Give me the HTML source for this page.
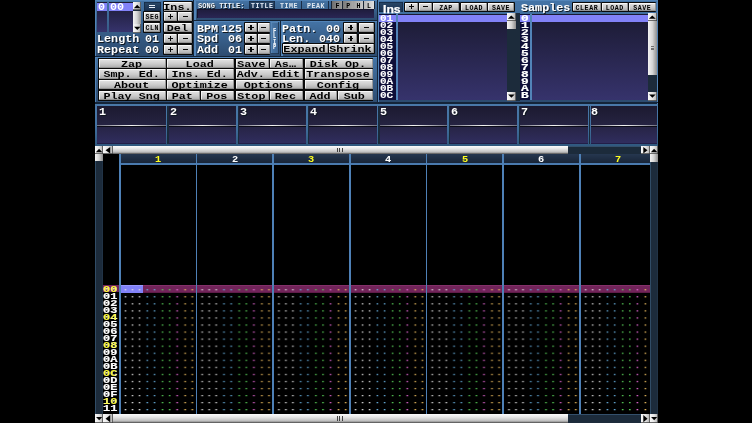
<!DOCTYPE html><html><head><meta charset="utf-8"><style>
html,body{margin:0;padding:0;background:#000;width:752px;height:423px;overflow:hidden}
#app{position:absolute;left:0;top:0;width:752px;height:423px;overflow:hidden;filter:blur(0.3px)}
#app div{position:absolute;box-sizing:border-box}
</style></head><body><div id="app">
<div style="left:94.60px;top:0.00px;width:563.40px;height:104.00px;background:#3b6290"></div>
<div style="left:95.00px;top:0.00px;width:99.40px;height:56.90px;background:linear-gradient(#4474a6,#2c4a6e)"></div>
<div style="left:95.00px;top:0.00px;width:99.40px;height:1.20px;background:#5284b8"></div>
<div style="left:95.00px;top:0.00px;width:1.20px;height:56.90px;background:#5284b8"></div>
<div style="left:95.00px;top:55.70px;width:99.40px;height:1.20px;background:#142438"></div>
<div style="left:193.20px;top:0.00px;width:1.20px;height:56.90px;background:#142438"></div>
<div style="left:194.40px;top:0.00px;width:183.40px;height:20.90px;background:linear-gradient(#4474a6,#2c4a6e)"></div>
<div style="left:194.40px;top:0.00px;width:183.40px;height:1.20px;background:#5284b8"></div>
<div style="left:194.40px;top:0.00px;width:1.20px;height:20.90px;background:#5284b8"></div>
<div style="left:194.40px;top:19.70px;width:183.40px;height:1.20px;background:#142438"></div>
<div style="left:376.60px;top:0.00px;width:1.20px;height:20.90px;background:#142438"></div>
<div style="left:194.40px;top:20.90px;width:87.00px;height:36.00px;background:linear-gradient(#4474a6,#2c4a6e)"></div>
<div style="left:194.40px;top:20.90px;width:87.00px;height:1.20px;background:#5284b8"></div>
<div style="left:194.40px;top:20.90px;width:1.20px;height:36.00px;background:#5284b8"></div>
<div style="left:194.40px;top:55.70px;width:87.00px;height:1.20px;background:#142438"></div>
<div style="left:280.20px;top:20.90px;width:1.20px;height:36.00px;background:#142438"></div>
<div style="left:281.40px;top:20.90px;width:96.40px;height:36.00px;background:linear-gradient(#4474a6,#2c4a6e)"></div>
<div style="left:281.40px;top:20.90px;width:96.40px;height:1.20px;background:#5284b8"></div>
<div style="left:281.40px;top:20.90px;width:1.20px;height:36.00px;background:#5284b8"></div>
<div style="left:281.40px;top:55.70px;width:96.40px;height:1.20px;background:#142438"></div>
<div style="left:376.60px;top:20.90px;width:1.20px;height:36.00px;background:#142438"></div>
<div style="left:95.00px;top:56.90px;width:282.80px;height:46.70px;background:linear-gradient(#4474a6,#2c4a6e)"></div>
<div style="left:95.00px;top:56.90px;width:282.80px;height:1.20px;background:#5284b8"></div>
<div style="left:95.00px;top:56.90px;width:1.20px;height:46.70px;background:#5284b8"></div>
<div style="left:95.00px;top:102.40px;width:282.80px;height:1.20px;background:#142438"></div>
<div style="left:376.60px;top:56.90px;width:1.20px;height:46.70px;background:#142438"></div>
<div style="left:377.80px;top:0.00px;width:280.20px;height:103.60px;background:linear-gradient(#4474a6,#2c4a6e)"></div>
<div style="left:377.80px;top:0.00px;width:280.20px;height:1.20px;background:#5284b8"></div>
<div style="left:377.80px;top:0.00px;width:1.20px;height:103.60px;background:#5284b8"></div>
<div style="left:377.80px;top:102.40px;width:280.20px;height:1.20px;background:#142438"></div>
<div style="left:656.80px;top:0.00px;width:1.20px;height:103.60px;background:#142438"></div>
<div style="left:656.90px;top:0.00px;width:1.10px;height:103.60px;background:#5284b8"></div>
<div style="left:97.30px;top:2.40px;width:10.00px;height:30.00px;background:linear-gradient(#1b1a32,#36336c)"></div>
<div style="left:109.20px;top:2.40px;width:23.80px;height:30.00px;background:linear-gradient(#1b1a32,#36336c)"></div>
<div style="left:97.30px;top:3.30px;width:10.00px;height:7.40px;background:#8282f8"></div>
<div style="left:109.20px;top:3.30px;width:23.80px;height:7.40px;background:#8282f8"></div>
<div style="left:98.20px;top:2.00px;font-family:'Liberation Mono',monospace;font-weight:bold;font-size:10.0px;line-height:11.328px;color:#fff;white-space:pre;letter-spacing:0px;transform:scaleX(1.175);transform-origin:0 0;">0</div>
<div style="left:109.80px;top:2.00px;font-family:'Liberation Mono',monospace;font-weight:bold;font-size:10.0px;line-height:11.328px;color:#fff;white-space:pre;letter-spacing:0px;transform:scaleX(1.175);transform-origin:0 0;">00</div>
<div style="left:132.90px;top:1.80px;width:8.40px;height:31.20px;background:#1c2b3b"></div>
<div style="left:132.90px;top:1.80px;width:8.40px;height:8.60px;background:linear-gradient(90deg,#fafafa,#e4e4e4 50%,#b0b0b0);box-shadow:inset -0.7px -0.7px 0 #404040"><svg viewBox="0 0 10 10" preserveAspectRatio="none" width="100%" height="100%" style="position:absolute;left:0;top:0"><path d="M1.0 7.4 L5.0 3.3 L9.0 7.4Z" fill="#000"/></svg></div>
<div style="left:132.90px;top:10.60px;width:8.40px;height:13.60px;background:linear-gradient(90deg,#f4f4f4,#d4d4d4 50%,#8e8e8e)"></div>
<div style="left:132.90px;top:24.40px;width:8.40px;height:8.60px;background:linear-gradient(90deg,#fafafa,#e4e4e4 50%,#b0b0b0);box-shadow:inset -0.7px -0.7px 0 #404040"><svg viewBox="0 0 10 10" preserveAspectRatio="none" width="100%" height="100%" style="position:absolute;left:0;top:0"><path d="M1.3 3.2 L5.1 7.0 L8.9 3.2Z" fill="#000"/></svg></div>
<div style="left:143.80px;top:1.70px;width:17.00px;height:9.20px;background:linear-gradient(#2a4868,#1a3050);box-shadow:inset 0 0 0 0.8px #142a44"></div>
<div style="left:148.90px;top:4.50px;width:6.60px;height:1.20px;background:#e8eef8"></div>
<div style="left:148.90px;top:7.00px;width:6.60px;height:1.20px;background:#e8eef8"></div>
<div style="left:143.40px;top:11.30px;width:17.80px;height:10.80px;background:#0a0a0a;border-radius:1px"></div>
<div style="left:144.30px;top:12.20px;width:16.00px;height:9.00px;background:linear-gradient(#f6f6f6 0%,#dedede 14%,#cacaca 55%,#a8a8a8 100%);box-shadow:inset -0.8px -0.8px 0 #8a8a8a,inset 0.8px 0.8px 0 #fbfbfb"></div>
<div style="left:144.30px;top:14.00px;width:16.00px;text-align:center;font-family:'Liberation Mono',monospace;font-weight:bold;font-size:6.6px;line-height:7.47648px;color:#000;white-space:pre;letter-spacing:0.55px;transform:scaleX(1.0);transform-origin:0 0;">SEG</div>
<div style="left:143.40px;top:22.00px;width:17.80px;height:11.40px;background:#0a0a0a;border-radius:1px"></div>
<div style="left:144.30px;top:22.90px;width:16.00px;height:9.60px;background:linear-gradient(#f6f6f6 0%,#dedede 14%,#cacaca 55%,#a8a8a8 100%);box-shadow:inset -0.8px -0.8px 0 #8a8a8a,inset 0.8px 0.8px 0 #fbfbfb"></div>
<div style="left:144.30px;top:25.00px;width:16.00px;text-align:center;font-family:'Liberation Mono',monospace;font-weight:bold;font-size:6.6px;line-height:7.47648px;color:#000;white-space:pre;letter-spacing:0.55px;transform:scaleX(1.0);transform-origin:0 0;">CLN</div>
<div style="left:162.60px;top:1.00px;width:30.60px;height:10.50px;background:#0a0a0a;border-radius:1px"></div>
<div style="left:163.50px;top:1.90px;width:28.80px;height:8.70px;background:linear-gradient(#f6f6f6 0%,#dedede 14%,#cacaca 55%,#a8a8a8 100%);box-shadow:inset -0.8px -0.8px 0 #8a8a8a,inset 0.8px 0.8px 0 #fbfbfb"></div>
<div style="left:162.60px;top:3.00px;width:23.53px;text-align:center;font-family:'Liberation Mono',monospace;font-weight:bold;font-size:9.6px;line-height:10.87488px;color:#000;white-space:pre;letter-spacing:0px;transform:scaleX(1.224);transform-origin:0 0;">Ins.</div>
<div style="left:162.60px;top:11.50px;width:15.50px;height:10.60px;background:#0a0a0a;border-radius:1px"></div>
<div style="left:163.50px;top:12.40px;width:13.70px;height:8.80px;background:linear-gradient(#f6f6f6 0%,#dedede 14%,#cacaca 55%,#a8a8a8 100%);box-shadow:inset -0.8px -0.8px 0 #8a8a8a,inset 0.8px 0.8px 0 #fbfbfb"></div>
<div style="left:167.55px;top:16.15px;width:5.60px;height:1.30px;background:#080808"></div>
<div style="left:169.50px;top:14.10px;width:1.70px;height:5.40px;background:#080808"></div>
<div style="left:177.30px;top:11.50px;width:15.90px;height:10.60px;background:#0a0a0a;border-radius:1px"></div>
<div style="left:178.20px;top:12.40px;width:14.10px;height:8.80px;background:linear-gradient(#f6f6f6 0%,#dedede 14%,#cacaca 55%,#a8a8a8 100%);box-shadow:inset -0.8px -0.8px 0 #8a8a8a,inset 0.8px 0.8px 0 #fbfbfb"></div>
<div style="left:182.65px;top:16.10px;width:5.20px;height:1.40px;background:#080808"></div>
<div style="left:162.60px;top:22.00px;width:30.60px;height:11.10px;background:#0a0a0a;border-radius:1px"></div>
<div style="left:163.50px;top:22.90px;width:28.80px;height:9.30px;background:linear-gradient(#f6f6f6 0%,#dedede 14%,#cacaca 55%,#a8a8a8 100%);box-shadow:inset -0.8px -0.8px 0 #8a8a8a,inset 0.8px 0.8px 0 #fbfbfb"></div>
<div style="left:162.60px;top:24.00px;width:23.53px;text-align:center;font-family:'Liberation Mono',monospace;font-weight:bold;font-size:9.6px;line-height:10.87488px;color:#000;white-space:pre;letter-spacing:0px;transform:scaleX(1.224);transform-origin:0 0;">Del</div>
<div style="left:162.60px;top:32.70px;width:15.50px;height:11.10px;background:#0a0a0a;border-radius:1px"></div>
<div style="left:163.50px;top:33.60px;width:13.70px;height:9.30px;background:linear-gradient(#f6f6f6 0%,#dedede 14%,#cacaca 55%,#a8a8a8 100%);box-shadow:inset -0.8px -0.8px 0 #8a8a8a,inset 0.8px 0.8px 0 #fbfbfb"></div>
<div style="left:167.55px;top:37.60px;width:5.60px;height:1.30px;background:#080808"></div>
<div style="left:169.50px;top:35.55px;width:1.70px;height:5.40px;background:#080808"></div>
<div style="left:177.30px;top:32.70px;width:15.90px;height:11.10px;background:#0a0a0a;border-radius:1px"></div>
<div style="left:178.20px;top:33.60px;width:14.10px;height:9.30px;background:linear-gradient(#f6f6f6 0%,#dedede 14%,#cacaca 55%,#a8a8a8 100%);box-shadow:inset -0.8px -0.8px 0 #8a8a8a,inset 0.8px 0.8px 0 #fbfbfb"></div>
<div style="left:182.65px;top:37.55px;width:5.20px;height:1.40px;background:#080808"></div>
<div style="left:162.60px;top:43.70px;width:15.50px;height:11.10px;background:#0a0a0a;border-radius:1px"></div>
<div style="left:163.50px;top:44.60px;width:13.70px;height:9.30px;background:linear-gradient(#f6f6f6 0%,#dedede 14%,#cacaca 55%,#a8a8a8 100%);box-shadow:inset -0.8px -0.8px 0 #8a8a8a,inset 0.8px 0.8px 0 #fbfbfb"></div>
<div style="left:167.55px;top:48.60px;width:5.60px;height:1.30px;background:#080808"></div>
<div style="left:169.50px;top:46.55px;width:1.70px;height:5.40px;background:#080808"></div>
<div style="left:177.30px;top:43.70px;width:15.90px;height:11.10px;background:#0a0a0a;border-radius:1px"></div>
<div style="left:178.20px;top:44.60px;width:14.10px;height:9.30px;background:linear-gradient(#f6f6f6 0%,#dedede 14%,#cacaca 55%,#a8a8a8 100%);box-shadow:inset -0.8px -0.8px 0 #8a8a8a,inset 0.8px 0.8px 0 #fbfbfb"></div>
<div style="left:182.65px;top:48.55px;width:5.20px;height:1.40px;background:#080808"></div>
<div style="left:96.60px;top:34.00px;font-family:'Liberation Mono',monospace;font-weight:bold;font-size:10.0px;line-height:11.328px;color:#fff;white-space:pre;letter-spacing:0px;transform:scaleX(1.175);transform-origin:0 0;text-shadow:0.9px 0.9px 0 #101820;">Length</div>
<div style="left:145.40px;top:34.00px;font-family:'Liberation Mono',monospace;font-weight:bold;font-size:10.0px;line-height:11.328px;color:#fff;white-space:pre;letter-spacing:0px;transform:scaleX(1.175);transform-origin:0 0;text-shadow:0.9px 0.9px 0 #101820;">01</div>
<div style="left:96.60px;top:45.00px;font-family:'Liberation Mono',monospace;font-weight:bold;font-size:10.0px;line-height:11.328px;color:#fff;white-space:pre;letter-spacing:0px;transform:scaleX(1.175);transform-origin:0 0;text-shadow:0.9px 0.9px 0 #101820;">Repeat</div>
<div style="left:145.40px;top:45.00px;font-family:'Liberation Mono',monospace;font-weight:bold;font-size:10.0px;line-height:11.328px;color:#fff;white-space:pre;letter-spacing:0px;transform:scaleX(1.175);transform-origin:0 0;text-shadow:0.9px 0.9px 0 #101820;">00</div>
<div style="left:197.60px;top:2.00px;font-family:'Liberation Mono',monospace;font-weight:bold;font-size:7.2px;line-height:8.15616px;color:#f0f4f8;white-space:pre;letter-spacing:0px;transform:scaleX(0.98);transform-origin:0 0;text-shadow:0.9px 0.9px 0 #101820;">SONG TITLE:</div>
<div style="left:249.20px;top:1.20px;width:26.20px;height:7.40px;background:linear-gradient(#2a4868,#1a3050);box-shadow:inset 0 0 0 0.8px #142a44"></div>
<div style="left:249.20px;top:3.00px;width:26.20px;text-align:center;font-family:'Liberation Mono',monospace;font-weight:bold;font-size:6.6px;line-height:7.47648px;color:#e4ecf8;white-space:pre;letter-spacing:0.55px;transform:scaleX(1.0);transform-origin:0 0;">TITLE</div>
<div style="left:275.60px;top:1.20px;width:26.00px;height:7.40px;background:linear-gradient(#4270a0,#3a6490)"></div>
<div style="left:300.90px;top:1.20px;width:1.00px;height:7.40px;background:#1a2c44"></div>
<div style="left:302.20px;top:1.20px;width:26.00px;height:7.40px;background:linear-gradient(#4270a0,#3a6490)"></div>
<div style="left:327.90px;top:1.20px;width:1.00px;height:7.40px;background:#1a2c44"></div>
<div style="left:276.40px;top:3.00px;width:25.20px;text-align:center;font-family:'Liberation Mono',monospace;font-weight:bold;font-size:6.6px;line-height:7.47648px;color:#e0e8f0;white-space:pre;letter-spacing:0.55px;transform:scaleX(1.0);transform-origin:0 0;">TIME</div>
<div style="left:304.30px;top:3.00px;width:23.40px;text-align:center;font-family:'Liberation Mono',monospace;font-weight:bold;font-size:6.6px;line-height:7.47648px;color:#e0e8f0;white-space:pre;letter-spacing:0.55px;transform:scaleX(1.0);transform-origin:0 0;">PEAK</div>
<div style="left:331.40px;top:0.60px;width:43.20px;height:8.80px;background:#182434"></div>
<div style="left:332.30px;top:1.40px;width:10.10px;height:7.20px;background:linear-gradient(90deg,#6e6e6e,#9a9a9a)"></div>
<div style="left:335.50px;top:3.00px;font-family:'Liberation Mono',monospace;font-weight:bold;font-size:6.6px;line-height:7.47648px;color:#000;white-space:pre;letter-spacing:0px;transform:scaleX(1.0);transform-origin:0 0;">F</div>
<div style="left:343.10px;top:1.40px;width:9.50px;height:7.20px;background:linear-gradient(90deg,#7a7a7a,#a8a8a8)"></div>
<div style="left:346.30px;top:3.00px;font-family:'Liberation Mono',monospace;font-weight:bold;font-size:6.6px;line-height:7.47648px;color:#000;white-space:pre;letter-spacing:0px;transform:scaleX(1.0);transform-origin:0 0;">P</div>
<div style="left:353.30px;top:1.40px;width:9.70px;height:7.20px;background:linear-gradient(90deg,#a0a0a0,#c8c8c8)"></div>
<div style="left:356.50px;top:3.00px;font-family:'Liberation Mono',monospace;font-weight:bold;font-size:6.6px;line-height:7.47648px;color:#000;white-space:pre;letter-spacing:0px;transform:scaleX(1.0);transform-origin:0 0;">H</div>
<div style="left:363.70px;top:1.40px;width:10.10px;height:7.20px;background:linear-gradient(90deg,#b8b8b8,#e0e0e0)"></div>
<div style="left:366.90px;top:3.00px;font-family:'Liberation Mono',monospace;font-weight:bold;font-size:6.6px;line-height:7.47648px;color:#000;white-space:pre;letter-spacing:0px;transform:scaleX(1.0);transform-origin:0 0;">L</div>
<div style="left:197.30px;top:9.40px;width:176.50px;height:8.60px;background:linear-gradient(#1e1c3c,#2a2654);box-shadow:inset 0.8px 0.8px 0 #141228"></div>
<div style="left:196.60px;top:24.00px;font-family:'Liberation Mono',monospace;font-weight:bold;font-size:10.0px;line-height:11.328px;color:#fff;white-space:pre;letter-spacing:0px;transform:scaleX(1.175);transform-origin:0 0;text-shadow:0.9px 0.9px 0 #101820;">BPM</div>
<div style="left:220.60px;top:24.00px;font-family:'Liberation Mono',monospace;font-weight:bold;font-size:10.0px;line-height:11.328px;color:#fff;white-space:pre;letter-spacing:0px;transform:scaleX(1.175);transform-origin:0 0;text-shadow:0.9px 0.9px 0 #101820;">125</div>
<div style="left:196.60px;top:34.00px;font-family:'Liberation Mono',monospace;font-weight:bold;font-size:10.0px;line-height:11.328px;color:#fff;white-space:pre;letter-spacing:0px;transform:scaleX(1.175);transform-origin:0 0;text-shadow:0.9px 0.9px 0 #101820;">Spd</div>
<div style="left:227.60px;top:34.00px;font-family:'Liberation Mono',monospace;font-weight:bold;font-size:10.0px;line-height:11.328px;color:#fff;white-space:pre;letter-spacing:0px;transform:scaleX(1.175);transform-origin:0 0;text-shadow:0.9px 0.9px 0 #101820;">06</div>
<div style="left:196.60px;top:45.00px;font-family:'Liberation Mono',monospace;font-weight:bold;font-size:10.0px;line-height:11.328px;color:#fff;white-space:pre;letter-spacing:0px;transform:scaleX(1.175);transform-origin:0 0;text-shadow:0.9px 0.9px 0 #101820;">Add</div>
<div style="left:227.60px;top:45.00px;font-family:'Liberation Mono',monospace;font-weight:bold;font-size:10.0px;line-height:11.328px;color:#fff;white-space:pre;letter-spacing:0px;transform:scaleX(1.175);transform-origin:0 0;text-shadow:0.9px 0.9px 0 #101820;">01</div>
<div style="left:244.10px;top:21.70px;width:13.50px;height:11.20px;background:#0a0a0a;border-radius:1px"></div>
<div style="left:245.00px;top:22.60px;width:11.70px;height:9.40px;background:linear-gradient(#f6f6f6 0%,#dedede 14%,#cacaca 55%,#a8a8a8 100%);box-shadow:inset -0.8px -0.8px 0 #8a8a8a,inset 0.8px 0.8px 0 #fbfbfb"></div>
<div style="left:248.05px;top:26.65px;width:5.60px;height:1.30px;background:#080808"></div>
<div style="left:250.00px;top:24.60px;width:1.70px;height:5.40px;background:#080808"></div>
<div style="left:256.70px;top:21.70px;width:13.80px;height:11.20px;background:#0a0a0a;border-radius:1px"></div>
<div style="left:257.60px;top:22.60px;width:12.00px;height:9.40px;background:linear-gradient(#f6f6f6 0%,#dedede 14%,#cacaca 55%,#a8a8a8 100%);box-shadow:inset -0.8px -0.8px 0 #8a8a8a,inset 0.8px 0.8px 0 #fbfbfb"></div>
<div style="left:261.00px;top:26.60px;width:5.20px;height:1.40px;background:#080808"></div>
<div style="left:244.10px;top:32.60px;width:13.50px;height:11.20px;background:#0a0a0a;border-radius:1px"></div>
<div style="left:245.00px;top:33.50px;width:11.70px;height:9.40px;background:linear-gradient(#f6f6f6 0%,#dedede 14%,#cacaca 55%,#a8a8a8 100%);box-shadow:inset -0.8px -0.8px 0 #8a8a8a,inset 0.8px 0.8px 0 #fbfbfb"></div>
<div style="left:248.05px;top:37.55px;width:5.60px;height:1.30px;background:#080808"></div>
<div style="left:250.00px;top:35.50px;width:1.70px;height:5.40px;background:#080808"></div>
<div style="left:256.70px;top:32.60px;width:13.80px;height:11.20px;background:#0a0a0a;border-radius:1px"></div>
<div style="left:257.60px;top:33.50px;width:12.00px;height:9.40px;background:linear-gradient(#f6f6f6 0%,#dedede 14%,#cacaca 55%,#a8a8a8 100%);box-shadow:inset -0.8px -0.8px 0 #8a8a8a,inset 0.8px 0.8px 0 #fbfbfb"></div>
<div style="left:261.00px;top:37.50px;width:5.20px;height:1.40px;background:#080808"></div>
<div style="left:244.10px;top:43.60px;width:13.50px;height:11.20px;background:#0a0a0a;border-radius:1px"></div>
<div style="left:245.00px;top:44.50px;width:11.70px;height:9.40px;background:linear-gradient(#f6f6f6 0%,#dedede 14%,#cacaca 55%,#a8a8a8 100%);box-shadow:inset -0.8px -0.8px 0 #8a8a8a,inset 0.8px 0.8px 0 #fbfbfb"></div>
<div style="left:248.05px;top:48.55px;width:5.60px;height:1.30px;background:#080808"></div>
<div style="left:250.00px;top:46.50px;width:1.70px;height:5.40px;background:#080808"></div>
<div style="left:256.70px;top:43.60px;width:13.80px;height:11.20px;background:#0a0a0a;border-radius:1px"></div>
<div style="left:257.60px;top:44.50px;width:12.00px;height:9.40px;background:linear-gradient(#f6f6f6 0%,#dedede 14%,#cacaca 55%,#a8a8a8 100%);box-shadow:inset -0.8px -0.8px 0 #8a8a8a,inset 0.8px 0.8px 0 #fbfbfb"></div>
<div style="left:261.00px;top:48.50px;width:5.20px;height:1.40px;background:#080808"></div>
<div style="left:270.60px;top:22.20px;width:8.40px;height:31.40px;background:linear-gradient(90deg,#4a78a8,#3c6492);box-shadow:inset -0.8px -0.8px 0 #1c3048,inset 0.8px 0.8px 0 #5a88b8"></div>
<div style="left:272.60px;top:28.92px;font-family:'Liberation Mono',monospace;font-weight:bold;font-size:6.4px;line-height:5.4px;color:#f0f4f8;white-space:pre;letter-spacing:0px;transform:scaleX(0.85);transform-origin:0 0;-webkit-text-stroke:0.1px #f0f4f8;">F
L
I
P</div>
<div style="left:282.20px;top:24.00px;font-family:'Liberation Mono',monospace;font-weight:bold;font-size:10.0px;line-height:11.328px;color:#fff;white-space:pre;letter-spacing:0px;transform:scaleX(1.175);transform-origin:0 0;text-shadow:0.9px 0.9px 0 #101820;">Patn.</div>
<div style="left:326.30px;top:24.00px;font-family:'Liberation Mono',monospace;font-weight:bold;font-size:10.0px;line-height:11.328px;color:#fff;white-space:pre;letter-spacing:0px;transform:scaleX(1.175);transform-origin:0 0;text-shadow:0.9px 0.9px 0 #101820;">00</div>
<div style="left:282.20px;top:34.00px;font-family:'Liberation Mono',monospace;font-weight:bold;font-size:10.0px;line-height:11.328px;color:#fff;white-space:pre;letter-spacing:0px;transform:scaleX(1.175);transform-origin:0 0;text-shadow:0.9px 0.9px 0 #101820;">Len.</div>
<div style="left:319.20px;top:34.00px;font-family:'Liberation Mono',monospace;font-weight:bold;font-size:10.0px;line-height:11.328px;color:#fff;white-space:pre;letter-spacing:0px;transform:scaleX(1.175);transform-origin:0 0;text-shadow:0.9px 0.9px 0 #101820;">040</div>
<div style="left:343.10px;top:21.80px;width:15.20px;height:11.20px;background:#0a0a0a;border-radius:1px"></div>
<div style="left:344.00px;top:22.70px;width:13.40px;height:9.40px;background:linear-gradient(#f6f6f6 0%,#dedede 14%,#cacaca 55%,#a8a8a8 100%);box-shadow:inset -0.8px -0.8px 0 #8a8a8a,inset 0.8px 0.8px 0 #fbfbfb"></div>
<div style="left:347.90px;top:26.75px;width:5.60px;height:1.30px;background:#080808"></div>
<div style="left:349.85px;top:24.70px;width:1.70px;height:5.40px;background:#080808"></div>
<div style="left:358.00px;top:21.80px;width:16.70px;height:11.20px;background:#0a0a0a;border-radius:1px"></div>
<div style="left:358.90px;top:22.70px;width:14.90px;height:9.40px;background:linear-gradient(#f6f6f6 0%,#dedede 14%,#cacaca 55%,#a8a8a8 100%);box-shadow:inset -0.8px -0.8px 0 #8a8a8a,inset 0.8px 0.8px 0 #fbfbfb"></div>
<div style="left:363.75px;top:26.70px;width:5.20px;height:1.40px;background:#080808"></div>
<div style="left:343.10px;top:32.60px;width:15.20px;height:11.20px;background:#0a0a0a;border-radius:1px"></div>
<div style="left:344.00px;top:33.50px;width:13.40px;height:9.40px;background:linear-gradient(#f6f6f6 0%,#dedede 14%,#cacaca 55%,#a8a8a8 100%);box-shadow:inset -0.8px -0.8px 0 #8a8a8a,inset 0.8px 0.8px 0 #fbfbfb"></div>
<div style="left:347.90px;top:37.55px;width:5.60px;height:1.30px;background:#080808"></div>
<div style="left:349.85px;top:35.50px;width:1.70px;height:5.40px;background:#080808"></div>
<div style="left:358.00px;top:32.60px;width:16.70px;height:11.20px;background:#0a0a0a;border-radius:1px"></div>
<div style="left:358.90px;top:33.50px;width:14.90px;height:9.40px;background:linear-gradient(#f6f6f6 0%,#dedede 14%,#cacaca 55%,#a8a8a8 100%);box-shadow:inset -0.8px -0.8px 0 #8a8a8a,inset 0.8px 0.8px 0 #fbfbfb"></div>
<div style="left:363.75px;top:37.50px;width:5.20px;height:1.40px;background:#080808"></div>
<div style="left:282.10px;top:43.30px;width:46.80px;height:10.90px;background:#0a0a0a;border-radius:1px"></div>
<div style="left:283.00px;top:44.20px;width:45.00px;height:9.10px;background:linear-gradient(#f6f6f6 0%,#dedede 14%,#cacaca 55%,#a8a8a8 100%);box-shadow:inset -0.8px -0.8px 0 #8a8a8a,inset 0.8px 0.8px 0 #fbfbfb"></div>
<div style="left:282.10px;top:45.00px;width:36.76px;text-align:center;font-family:'Liberation Mono',monospace;font-weight:bold;font-size:9.6px;line-height:10.87488px;color:#000;white-space:pre;letter-spacing:0px;transform:scaleX(1.224);transform-origin:0 0;">Expand</div>
<div style="left:328.10px;top:43.30px;width:46.60px;height:10.90px;background:#0a0a0a;border-radius:1px"></div>
<div style="left:329.00px;top:44.20px;width:44.80px;height:9.10px;background:linear-gradient(#f6f6f6 0%,#dedede 14%,#cacaca 55%,#a8a8a8 100%);box-shadow:inset -0.8px -0.8px 0 #8a8a8a,inset 0.8px 0.8px 0 #fbfbfb"></div>
<div style="left:328.10px;top:45.00px;width:36.60px;text-align:center;font-family:'Liberation Mono',monospace;font-weight:bold;font-size:9.6px;line-height:10.87488px;color:#000;white-space:pre;letter-spacing:0px;transform:scaleX(1.224);transform-origin:0 0;">Shrink</div>
<div style="left:97.60px;top:58.00px;width:275.80px;height:42.90px;background:#0a0a0a"></div>
<div style="left:98.50px;top:58.90px;width:67.20px;height:8.90px;background:linear-gradient(#f6f6f6 0%,#dedede 14%,#cacaca 55%,#a8a8a8 100%);box-shadow:inset -0.8px -0.8px 0 #8a8a8a,inset 0.8px 0.8px 0 #fbfbfb"></div>
<div style="left:97.60px;top:60.00px;width:54.90px;text-align:center;font-family:'Liberation Mono',monospace;font-weight:bold;font-size:9.6px;line-height:10.87488px;color:#000;white-space:pre;letter-spacing:0px;transform:scaleX(1.224);transform-origin:0 0;">Zap</div>
<div style="left:167.00px;top:58.90px;width:67.40px;height:8.90px;background:linear-gradient(#f6f6f6 0%,#dedede 14%,#cacaca 55%,#a8a8a8 100%);box-shadow:inset -0.8px -0.8px 0 #8a8a8a,inset 0.8px 0.8px 0 #fbfbfb"></div>
<div style="left:166.10px;top:60.00px;width:55.07px;text-align:center;font-family:'Liberation Mono',monospace;font-weight:bold;font-size:9.6px;line-height:10.87488px;color:#000;white-space:pre;letter-spacing:0px;transform:scaleX(1.224);transform-origin:0 0;">Load</div>
<div style="left:236.00px;top:58.90px;width:32.70px;height:8.90px;background:linear-gradient(#f6f6f6 0%,#dedede 14%,#cacaca 55%,#a8a8a8 100%);box-shadow:inset -0.8px -0.8px 0 #8a8a8a,inset 0.8px 0.8px 0 #fbfbfb"></div>
<div style="left:235.10px;top:60.00px;width:26.72px;text-align:center;font-family:'Liberation Mono',monospace;font-weight:bold;font-size:9.6px;line-height:10.87488px;color:#000;white-space:pre;letter-spacing:0px;transform:scaleX(1.224);transform-origin:0 0;">Save</div>
<div style="left:270.00px;top:58.90px;width:32.80px;height:8.90px;background:linear-gradient(#f6f6f6 0%,#dedede 14%,#cacaca 55%,#a8a8a8 100%);box-shadow:inset -0.8px -0.8px 0 #8a8a8a,inset 0.8px 0.8px 0 #fbfbfb"></div>
<div style="left:269.10px;top:60.00px;width:26.80px;text-align:center;font-family:'Liberation Mono',monospace;font-weight:bold;font-size:9.6px;line-height:10.87488px;color:#000;white-space:pre;letter-spacing:0px;transform:scaleX(1.224);transform-origin:0 0;">As&#8230;</div>
<div style="left:304.60px;top:58.90px;width:68.00px;height:8.90px;background:linear-gradient(#f6f6f6 0%,#dedede 14%,#cacaca 55%,#a8a8a8 100%);box-shadow:inset -0.8px -0.8px 0 #8a8a8a,inset 0.8px 0.8px 0 #fbfbfb"></div>
<div style="left:303.70px;top:60.00px;width:55.56px;text-align:center;font-family:'Liberation Mono',monospace;font-weight:bold;font-size:9.6px;line-height:10.87488px;color:#000;white-space:pre;letter-spacing:0px;transform:scaleX(1.224);transform-origin:0 0;">Disk Op.</div>
<div style="left:98.50px;top:69.30px;width:67.20px;height:9.30px;background:linear-gradient(#f6f6f6 0%,#dedede 14%,#cacaca 55%,#a8a8a8 100%);box-shadow:inset -0.8px -0.8px 0 #8a8a8a,inset 0.8px 0.8px 0 #fbfbfb"></div>
<div style="left:97.60px;top:70.00px;width:54.90px;text-align:center;font-family:'Liberation Mono',monospace;font-weight:bold;font-size:9.6px;line-height:10.87488px;color:#000;white-space:pre;letter-spacing:0px;transform:scaleX(1.224);transform-origin:0 0;">Smp. Ed.</div>
<div style="left:167.00px;top:69.30px;width:67.40px;height:9.30px;background:linear-gradient(#f6f6f6 0%,#dedede 14%,#cacaca 55%,#a8a8a8 100%);box-shadow:inset -0.8px -0.8px 0 #8a8a8a,inset 0.8px 0.8px 0 #fbfbfb"></div>
<div style="left:166.10px;top:70.00px;width:55.07px;text-align:center;font-family:'Liberation Mono',monospace;font-weight:bold;font-size:9.6px;line-height:10.87488px;color:#000;white-space:pre;letter-spacing:0px;transform:scaleX(1.224);transform-origin:0 0;">Ins. Ed.</div>
<div style="left:236.00px;top:69.30px;width:66.80px;height:9.30px;background:linear-gradient(#f6f6f6 0%,#dedede 14%,#cacaca 55%,#a8a8a8 100%);box-shadow:inset -0.8px -0.8px 0 #8a8a8a,inset 0.8px 0.8px 0 #fbfbfb"></div>
<div style="left:235.10px;top:70.00px;width:54.58px;text-align:center;font-family:'Liberation Mono',monospace;font-weight:bold;font-size:9.6px;line-height:10.87488px;color:#000;white-space:pre;letter-spacing:0px;transform:scaleX(1.224);transform-origin:0 0;">Adv. Edit</div>
<div style="left:304.60px;top:69.30px;width:68.00px;height:9.30px;background:linear-gradient(#f6f6f6 0%,#dedede 14%,#cacaca 55%,#a8a8a8 100%);box-shadow:inset -0.8px -0.8px 0 #8a8a8a,inset 0.8px 0.8px 0 #fbfbfb"></div>
<div style="left:303.70px;top:70.00px;width:55.56px;text-align:center;font-family:'Liberation Mono',monospace;font-weight:bold;font-size:9.6px;line-height:10.87488px;color:#000;white-space:pre;letter-spacing:0px;transform:scaleX(1.224);transform-origin:0 0;">Transpose</div>
<div style="left:98.50px;top:80.30px;width:67.20px;height:8.90px;background:linear-gradient(#f6f6f6 0%,#dedede 14%,#cacaca 55%,#a8a8a8 100%);box-shadow:inset -0.8px -0.8px 0 #8a8a8a,inset 0.8px 0.8px 0 #fbfbfb"></div>
<div style="left:97.60px;top:81.00px;width:54.90px;text-align:center;font-family:'Liberation Mono',monospace;font-weight:bold;font-size:9.6px;line-height:10.87488px;color:#000;white-space:pre;letter-spacing:0px;transform:scaleX(1.224);transform-origin:0 0;">About</div>
<div style="left:167.00px;top:80.30px;width:67.40px;height:8.90px;background:linear-gradient(#f6f6f6 0%,#dedede 14%,#cacaca 55%,#a8a8a8 100%);box-shadow:inset -0.8px -0.8px 0 #8a8a8a,inset 0.8px 0.8px 0 #fbfbfb"></div>
<div style="left:166.10px;top:81.00px;width:55.07px;text-align:center;font-family:'Liberation Mono',monospace;font-weight:bold;font-size:9.6px;line-height:10.87488px;color:#000;white-space:pre;letter-spacing:0px;transform:scaleX(1.224);transform-origin:0 0;">Optimize</div>
<div style="left:236.00px;top:80.30px;width:66.80px;height:8.90px;background:linear-gradient(#f6f6f6 0%,#dedede 14%,#cacaca 55%,#a8a8a8 100%);box-shadow:inset -0.8px -0.8px 0 #8a8a8a,inset 0.8px 0.8px 0 #fbfbfb"></div>
<div style="left:235.10px;top:81.00px;width:54.58px;text-align:center;font-family:'Liberation Mono',monospace;font-weight:bold;font-size:9.6px;line-height:10.87488px;color:#000;white-space:pre;letter-spacing:0px;transform:scaleX(1.224);transform-origin:0 0;">Options</div>
<div style="left:304.60px;top:80.30px;width:68.00px;height:8.90px;background:linear-gradient(#f6f6f6 0%,#dedede 14%,#cacaca 55%,#a8a8a8 100%);box-shadow:inset -0.8px -0.8px 0 #8a8a8a,inset 0.8px 0.8px 0 #fbfbfb"></div>
<div style="left:303.70px;top:81.00px;width:55.56px;text-align:center;font-family:'Liberation Mono',monospace;font-weight:bold;font-size:9.6px;line-height:10.87488px;color:#000;white-space:pre;letter-spacing:0px;transform:scaleX(1.224);transform-origin:0 0;">Config</div>
<div style="left:98.50px;top:90.90px;width:67.20px;height:9.30px;background:linear-gradient(#f6f6f6 0%,#dedede 14%,#cacaca 55%,#a8a8a8 100%);box-shadow:inset -0.8px -0.8px 0 #8a8a8a,inset 0.8px 0.8px 0 #fbfbfb"></div>
<div style="left:97.60px;top:92.00px;width:54.90px;text-align:center;font-family:'Liberation Mono',monospace;font-weight:bold;font-size:9.6px;line-height:10.87488px;color:#000;white-space:pre;letter-spacing:0px;transform:scaleX(1.224);transform-origin:0 0;">Play Sng</div>
<div style="left:167.00px;top:90.90px;width:32.50px;height:9.30px;background:linear-gradient(#f6f6f6 0%,#dedede 14%,#cacaca 55%,#a8a8a8 100%);box-shadow:inset -0.8px -0.8px 0 #8a8a8a,inset 0.8px 0.8px 0 #fbfbfb"></div>
<div style="left:166.10px;top:92.00px;width:26.55px;text-align:center;font-family:'Liberation Mono',monospace;font-weight:bold;font-size:9.6px;line-height:10.87488px;color:#000;white-space:pre;letter-spacing:0px;transform:scaleX(1.224);transform-origin:0 0;">Pat</div>
<div style="left:200.80px;top:90.90px;width:33.60px;height:9.30px;background:linear-gradient(#f6f6f6 0%,#dedede 14%,#cacaca 55%,#a8a8a8 100%);box-shadow:inset -0.8px -0.8px 0 #8a8a8a,inset 0.8px 0.8px 0 #fbfbfb"></div>
<div style="left:199.90px;top:92.00px;width:27.45px;text-align:center;font-family:'Liberation Mono',monospace;font-weight:bold;font-size:9.6px;line-height:10.87488px;color:#000;white-space:pre;letter-spacing:0px;transform:scaleX(1.224);transform-origin:0 0;">Pos</div>
<div style="left:236.00px;top:90.90px;width:32.70px;height:9.30px;background:linear-gradient(#f6f6f6 0%,#dedede 14%,#cacaca 55%,#a8a8a8 100%);box-shadow:inset -0.8px -0.8px 0 #8a8a8a,inset 0.8px 0.8px 0 #fbfbfb"></div>
<div style="left:235.10px;top:92.00px;width:26.72px;text-align:center;font-family:'Liberation Mono',monospace;font-weight:bold;font-size:9.6px;line-height:10.87488px;color:#000;white-space:pre;letter-spacing:0px;transform:scaleX(1.224);transform-origin:0 0;">Stop</div>
<div style="left:270.00px;top:90.90px;width:32.80px;height:9.30px;background:linear-gradient(#f6f6f6 0%,#dedede 14%,#cacaca 55%,#a8a8a8 100%);box-shadow:inset -0.8px -0.8px 0 #8a8a8a,inset 0.8px 0.8px 0 #fbfbfb"></div>
<div style="left:269.10px;top:92.00px;width:26.80px;text-align:center;font-family:'Liberation Mono',monospace;font-weight:bold;font-size:9.6px;line-height:10.87488px;color:#000;white-space:pre;letter-spacing:0px;transform:scaleX(1.224);transform-origin:0 0;">Rec</div>
<div style="left:304.60px;top:90.90px;width:32.20px;height:9.30px;background:linear-gradient(#f6f6f6 0%,#dedede 14%,#cacaca 55%,#a8a8a8 100%);box-shadow:inset -0.8px -0.8px 0 #8a8a8a,inset 0.8px 0.8px 0 #fbfbfb"></div>
<div style="left:303.70px;top:92.00px;width:26.31px;text-align:center;font-family:'Liberation Mono',monospace;font-weight:bold;font-size:9.6px;line-height:10.87488px;color:#000;white-space:pre;letter-spacing:0px;transform:scaleX(1.224);transform-origin:0 0;">Add</div>
<div style="left:338.10px;top:90.90px;width:34.50px;height:9.30px;background:linear-gradient(#f6f6f6 0%,#dedede 14%,#cacaca 55%,#a8a8a8 100%);box-shadow:inset -0.8px -0.8px 0 #8a8a8a,inset 0.8px 0.8px 0 #fbfbfb"></div>
<div style="left:337.20px;top:92.00px;width:28.19px;text-align:center;font-family:'Liberation Mono',monospace;font-weight:bold;font-size:9.6px;line-height:10.87488px;color:#000;white-space:pre;letter-spacing:0px;transform:scaleX(1.224);transform-origin:0 0;">Sub</div>
<div style="left:378.80px;top:2.30px;width:24.20px;height:9.30px;background:linear-gradient(#2a4868,#1a3050);box-shadow:inset 0 0 0 0.8px #142a44"></div>
<div style="left:383.40px;top:4.00px;font-family:'Liberation Sans',sans-serif;font-weight:bold;font-size:10.2px;line-height:11.554559999999999px;color:#fff;white-space:pre;letter-spacing:0px;transform:scaleX(1.2);transform-origin:0 0;-webkit-text-stroke:0.25px #fff;">Ins</div>
<div style="left:403.90px;top:1.70px;width:15.00px;height:10.20px;background:#0a0a0a;border-radius:1px"></div>
<div style="left:404.80px;top:2.60px;width:13.20px;height:8.40px;background:linear-gradient(#f6f6f6 0%,#dedede 14%,#cacaca 55%,#a8a8a8 100%);box-shadow:inset -0.8px -0.8px 0 #8a8a8a,inset 0.8px 0.8px 0 #fbfbfb"></div>
<div style="left:408.60px;top:6.15px;width:5.60px;height:1.30px;background:#080808"></div>
<div style="left:410.55px;top:4.10px;width:1.70px;height:5.40px;background:#080808"></div>
<div style="left:418.00px;top:1.70px;width:15.10px;height:10.20px;background:#0a0a0a;border-radius:1px"></div>
<div style="left:418.90px;top:2.60px;width:13.30px;height:8.40px;background:linear-gradient(#f6f6f6 0%,#dedede 14%,#cacaca 55%,#a8a8a8 100%);box-shadow:inset -0.8px -0.8px 0 #8a8a8a,inset 0.8px 0.8px 0 #fbfbfb"></div>
<div style="left:422.95px;top:6.10px;width:5.20px;height:1.40px;background:#080808"></div>
<div style="left:432.30px;top:1.70px;width:27.70px;height:10.20px;background:#0a0a0a;border-radius:1px"></div>
<div style="left:433.20px;top:2.60px;width:25.90px;height:8.40px;background:linear-gradient(#f6f6f6 0%,#dedede 14%,#cacaca 55%,#a8a8a8 100%);box-shadow:inset -0.8px -0.8px 0 #8a8a8a,inset 0.8px 0.8px 0 #fbfbfb"></div>
<div style="left:433.20px;top:5.00px;width:25.90px;text-align:center;font-family:'Liberation Mono',monospace;font-weight:bold;font-size:6.6px;line-height:7.47648px;color:#000;white-space:pre;letter-spacing:0.55px;transform:scaleX(1.0);transform-origin:0 0;">ZAP</div>
<div style="left:460.10px;top:1.70px;width:27.60px;height:10.20px;background:#0a0a0a;border-radius:1px"></div>
<div style="left:461.00px;top:2.60px;width:25.80px;height:8.40px;background:linear-gradient(#f6f6f6 0%,#dedede 14%,#cacaca 55%,#a8a8a8 100%);box-shadow:inset -0.8px -0.8px 0 #8a8a8a,inset 0.8px 0.8px 0 #fbfbfb"></div>
<div style="left:461.00px;top:5.00px;width:25.80px;text-align:center;font-family:'Liberation Mono',monospace;font-weight:bold;font-size:6.6px;line-height:7.47648px;color:#000;white-space:pre;letter-spacing:0.55px;transform:scaleX(1.0);transform-origin:0 0;">LOAD</div>
<div style="left:487.30px;top:1.70px;width:27.60px;height:10.20px;background:#0a0a0a;border-radius:1px"></div>
<div style="left:488.20px;top:2.60px;width:25.80px;height:8.40px;background:linear-gradient(#f6f6f6 0%,#dedede 14%,#cacaca 55%,#a8a8a8 100%);box-shadow:inset -0.8px -0.8px 0 #8a8a8a,inset 0.8px 0.8px 0 #fbfbfb"></div>
<div style="left:488.20px;top:5.00px;width:25.80px;text-align:center;font-family:'Liberation Mono',monospace;font-weight:bold;font-size:6.6px;line-height:7.47648px;color:#000;white-space:pre;letter-spacing:0.55px;transform:scaleX(1.0);transform-origin:0 0;">SAVE</div>
<div style="left:378.80px;top:13.60px;width:17.40px;height:86.20px;background:#0e0e38"></div>
<div style="left:396.20px;top:13.60px;width:2.20px;height:86.20px;background:#5284b8"></div>
<div style="left:398.40px;top:13.60px;width:109.00px;height:86.20px;background:linear-gradient(#1b1a32,#36336c)"></div>
<div style="left:379.00px;top:14.50px;width:17.20px;height:7.50px;background:#8282f8"></div>
<div style="left:398.40px;top:14.50px;width:109.00px;height:7.50px;background:#8282f8"></div>
<div style="left:380.00px;top:14.69px;font-family:'Liberation Mono',monospace;font-weight:bold;font-size:9.2px;line-height:7.05px;color:#fff;white-space:pre;letter-spacing:0px;transform:scaleX(1.2);transform-origin:0 0;-webkit-text-stroke:0.1px #fff;">01
02
03
04
05
06
07
08
09
0A
0B
0C</div>
<div style="left:507.40px;top:13.40px;width:12.40px;height:87.20px;background:#1c2b3b"></div>
<div style="left:507.40px;top:13.40px;width:8.60px;height:7.80px;background:linear-gradient(90deg,#fafafa,#e4e4e4 50%,#b0b0b0);box-shadow:inset -0.7px -0.7px 0 #404040"><svg viewBox="0 0 10 10" preserveAspectRatio="none" width="100%" height="100%" style="position:absolute;left:0;top:0"><path d="M1.0 7.4 L5.0 3.3 L9.0 7.4Z" fill="#000"/></svg></div>
<div style="left:507.40px;top:21.20px;width:8.60px;height:7.40px;background:linear-gradient(90deg,#f4f4f4,#d4d4d4 50%,#8e8e8e)"></div>
<div style="left:507.40px;top:92.40px;width:8.60px;height:8.20px;background:linear-gradient(90deg,#fafafa,#e4e4e4 50%,#b0b0b0);box-shadow:inset -0.7px -0.7px 0 #404040"><svg viewBox="0 0 10 10" preserveAspectRatio="none" width="100%" height="100%" style="position:absolute;left:0;top:0"><path d="M1.3 3.2 L5.1 7.0 L8.9 3.2Z" fill="#000"/></svg></div>
<div style="left:520.60px;top:3.00px;font-family:'Liberation Mono',monospace;font-weight:bold;font-size:10.0px;line-height:11.328px;color:#fff;white-space:pre;letter-spacing:0px;transform:scaleX(1.175);transform-origin:0 0;text-shadow:0.9px 0.9px 0 #101820;-webkit-text-stroke:0.1px #fff;">Samples</div>
<div style="left:572.30px;top:1.70px;width:29.20px;height:10.20px;background:#0a0a0a;border-radius:1px"></div>
<div style="left:573.20px;top:2.60px;width:27.40px;height:8.40px;background:linear-gradient(#f6f6f6 0%,#dedede 14%,#cacaca 55%,#a8a8a8 100%);box-shadow:inset -0.8px -0.8px 0 #8a8a8a,inset 0.8px 0.8px 0 #fbfbfb"></div>
<div style="left:573.20px;top:5.00px;width:27.40px;text-align:center;font-family:'Liberation Mono',monospace;font-weight:bold;font-size:6.6px;line-height:7.47648px;color:#000;white-space:pre;letter-spacing:0.55px;transform:scaleX(1.0);transform-origin:0 0;">CLEAR</div>
<div style="left:600.70px;top:1.70px;width:28.20px;height:10.20px;background:#0a0a0a;border-radius:1px"></div>
<div style="left:601.60px;top:2.60px;width:26.40px;height:8.40px;background:linear-gradient(#f6f6f6 0%,#dedede 14%,#cacaca 55%,#a8a8a8 100%);box-shadow:inset -0.8px -0.8px 0 #8a8a8a,inset 0.8px 0.8px 0 #fbfbfb"></div>
<div style="left:601.60px;top:5.00px;width:26.40px;text-align:center;font-family:'Liberation Mono',monospace;font-weight:bold;font-size:6.6px;line-height:7.47648px;color:#000;white-space:pre;letter-spacing:0.55px;transform:scaleX(1.0);transform-origin:0 0;">LOAD</div>
<div style="left:628.10px;top:1.70px;width:28.30px;height:10.20px;background:#0a0a0a;border-radius:1px"></div>
<div style="left:629.00px;top:2.60px;width:26.50px;height:8.40px;background:linear-gradient(#f6f6f6 0%,#dedede 14%,#cacaca 55%,#a8a8a8 100%);box-shadow:inset -0.8px -0.8px 0 #8a8a8a,inset 0.8px 0.8px 0 #fbfbfb"></div>
<div style="left:629.00px;top:5.00px;width:26.50px;text-align:center;font-family:'Liberation Mono',monospace;font-weight:bold;font-size:6.6px;line-height:7.47648px;color:#000;white-space:pre;letter-spacing:0.55px;transform:scaleX(1.0);transform-origin:0 0;">SAVE</div>
<div style="left:520.20px;top:13.60px;width:9.80px;height:86.40px;background:#0e0e38"></div>
<div style="left:530.00px;top:13.60px;width:2.00px;height:86.40px;background:#5284b8"></div>
<div style="left:532.00px;top:13.60px;width:116.00px;height:86.40px;background:linear-gradient(#1b1a32,#36336c)"></div>
<div style="left:520.20px;top:14.50px;width:9.80px;height:7.50px;background:#8282f8"></div>
<div style="left:532.00px;top:14.50px;width:116.00px;height:7.50px;background:#8282f8"></div>
<div style="left:520.80px;top:14.69px;font-family:'Liberation Mono',monospace;font-weight:bold;font-size:9.2px;line-height:7.05px;color:#fff;white-space:pre;letter-spacing:0px;transform:scaleX(1.4);transform-origin:0 0;-webkit-text-stroke:0.2px #fff;">0
1
2
3
4
5
6
7
8
9
A
B</div>
<div style="left:648.00px;top:13.40px;width:8.60px;height:87.20px;background:#1c2b3b"></div>
<div style="left:648.00px;top:13.40px;width:8.60px;height:7.80px;background:linear-gradient(90deg,#fafafa,#e4e4e4 50%,#b0b0b0);box-shadow:inset -0.7px -0.7px 0 #404040"><svg viewBox="0 0 10 10" preserveAspectRatio="none" width="100%" height="100%" style="position:absolute;left:0;top:0"><path d="M1.0 7.4 L5.0 3.3 L9.0 7.4Z" fill="#000"/></svg></div>
<div style="left:648.00px;top:21.20px;width:8.60px;height:54.30px;background:linear-gradient(90deg,#f4f4f4,#d4d4d4 50%,#8e8e8e)"></div>
<div style="left:650.60px;top:46.00px;width:3.20px;height:0.70px;background:#707070"></div>
<div style="left:650.60px;top:47.60px;width:3.20px;height:0.70px;background:#707070"></div>
<div style="left:650.60px;top:49.20px;width:3.20px;height:0.70px;background:#707070"></div>
<div style="left:648.00px;top:92.40px;width:8.60px;height:8.20px;background:linear-gradient(90deg,#fafafa,#e4e4e4 50%,#b0b0b0);box-shadow:inset -0.7px -0.7px 0 #404040"><svg viewBox="0 0 10 10" preserveAspectRatio="none" width="100%" height="100%" style="position:absolute;left:0;top:0"><path d="M1.3 3.2 L5.1 7.0 L8.9 3.2Z" fill="#000"/></svg></div>
<div style="left:94.80px;top:103.60px;width:563.20px;height:42.20px;background:linear-gradient(#4a78a8,#4272a2 50%,#30587e)"></div>
<div style="left:95.00px;top:101.80px;width:563.00px;height:1.60px;background:#142438"></div>
<div style="left:96.60px;top:105.60px;width:69.25px;height:37.60px;background:linear-gradient(#1c1a30,#24223f 45%,#302d5e)"></div>
<div style="left:96.60px;top:143.20px;width:69.25px;height:1.00px;background:#221e48"></div>
<div style="left:96.60px;top:125.90px;width:69.25px;height:1.00px;background:#0c0c18"></div>
<div style="left:96.60px;top:124.90px;width:69.25px;height:1.10px;background:linear-gradient(90deg,#707080,#f4f4f4 50%,#707080)"></div>
<div style="left:99.00px;top:107.00px;font-family:'Liberation Mono',monospace;font-weight:bold;font-size:10.0px;line-height:11.328px;color:#fff;white-space:pre;letter-spacing:0px;transform:scaleX(1.175);transform-origin:0 0;text-shadow:0.9px 0.9px 0 #101820;">1</div>
<div style="left:167.30px;top:105.60px;width:1.40px;height:38.60px;background:#1a2a3c"></div>
<div style="left:168.70px;top:105.60px;width:67.45px;height:37.60px;background:linear-gradient(#1c1a30,#24223f 45%,#302d5e)"></div>
<div style="left:168.70px;top:143.20px;width:67.45px;height:1.00px;background:#221e48"></div>
<div style="left:168.70px;top:125.90px;width:67.45px;height:1.00px;background:#0c0c18"></div>
<div style="left:168.70px;top:124.90px;width:67.45px;height:1.10px;background:linear-gradient(90deg,#707080,#f4f4f4 50%,#707080)"></div>
<div style="left:169.50px;top:107.00px;font-family:'Liberation Mono',monospace;font-weight:bold;font-size:10.0px;line-height:11.328px;color:#fff;white-space:pre;letter-spacing:0px;transform:scaleX(1.175);transform-origin:0 0;text-shadow:0.9px 0.9px 0 #101820;">2</div>
<div style="left:237.60px;top:105.60px;width:1.40px;height:38.60px;background:#1a2a3c"></div>
<div style="left:239.00px;top:105.60px;width:67.45px;height:37.60px;background:linear-gradient(#1c1a30,#24223f 45%,#302d5e)"></div>
<div style="left:239.00px;top:143.20px;width:67.45px;height:1.00px;background:#221e48"></div>
<div style="left:239.00px;top:125.90px;width:67.45px;height:1.00px;background:#0c0c18"></div>
<div style="left:239.00px;top:124.90px;width:67.45px;height:1.10px;background:linear-gradient(90deg,#707080,#f4f4f4 50%,#707080)"></div>
<div style="left:239.80px;top:107.00px;font-family:'Liberation Mono',monospace;font-weight:bold;font-size:10.0px;line-height:11.328px;color:#fff;white-space:pre;letter-spacing:0px;transform:scaleX(1.175);transform-origin:0 0;text-shadow:0.9px 0.9px 0 #101820;">3</div>
<div style="left:307.90px;top:105.60px;width:1.40px;height:38.60px;background:#1a2a3c"></div>
<div style="left:309.30px;top:105.60px;width:67.45px;height:37.60px;background:linear-gradient(#1c1a30,#24223f 45%,#302d5e)"></div>
<div style="left:309.30px;top:143.20px;width:67.45px;height:1.00px;background:#221e48"></div>
<div style="left:309.30px;top:125.90px;width:67.45px;height:1.00px;background:#0c0c18"></div>
<div style="left:309.30px;top:124.90px;width:67.45px;height:1.10px;background:linear-gradient(90deg,#707080,#f4f4f4 50%,#707080)"></div>
<div style="left:310.10px;top:107.00px;font-family:'Liberation Mono',monospace;font-weight:bold;font-size:10.0px;line-height:11.328px;color:#fff;white-space:pre;letter-spacing:0px;transform:scaleX(1.175);transform-origin:0 0;text-shadow:0.9px 0.9px 0 #101820;">4</div>
<div style="left:378.20px;top:105.60px;width:1.40px;height:38.60px;background:#1a2a3c"></div>
<div style="left:379.60px;top:105.60px;width:67.45px;height:37.60px;background:linear-gradient(#1c1a30,#24223f 45%,#302d5e)"></div>
<div style="left:379.60px;top:143.20px;width:67.45px;height:1.00px;background:#221e48"></div>
<div style="left:379.60px;top:125.90px;width:67.45px;height:1.00px;background:#0c0c18"></div>
<div style="left:379.60px;top:124.90px;width:67.45px;height:1.10px;background:linear-gradient(90deg,#707080,#f4f4f4 50%,#707080)"></div>
<div style="left:380.40px;top:107.00px;font-family:'Liberation Mono',monospace;font-weight:bold;font-size:10.0px;line-height:11.328px;color:#fff;white-space:pre;letter-spacing:0px;transform:scaleX(1.175);transform-origin:0 0;text-shadow:0.9px 0.9px 0 #101820;">5</div>
<div style="left:448.50px;top:105.60px;width:1.40px;height:38.60px;background:#1a2a3c"></div>
<div style="left:449.90px;top:105.60px;width:67.45px;height:37.60px;background:linear-gradient(#1c1a30,#24223f 45%,#302d5e)"></div>
<div style="left:449.90px;top:143.20px;width:67.45px;height:1.00px;background:#221e48"></div>
<div style="left:449.90px;top:125.90px;width:67.45px;height:1.00px;background:#0c0c18"></div>
<div style="left:449.90px;top:124.90px;width:67.45px;height:1.10px;background:linear-gradient(90deg,#707080,#f4f4f4 50%,#707080)"></div>
<div style="left:450.70px;top:107.00px;font-family:'Liberation Mono',monospace;font-weight:bold;font-size:10.0px;line-height:11.328px;color:#fff;white-space:pre;letter-spacing:0px;transform:scaleX(1.175);transform-origin:0 0;text-shadow:0.9px 0.9px 0 #101820;">6</div>
<div style="left:518.80px;top:105.60px;width:1.40px;height:38.60px;background:#1a2a3c"></div>
<div style="left:520.20px;top:105.60px;width:67.45px;height:37.60px;background:linear-gradient(#1c1a30,#24223f 45%,#302d5e)"></div>
<div style="left:520.20px;top:143.20px;width:67.45px;height:1.00px;background:#221e48"></div>
<div style="left:520.20px;top:125.90px;width:67.45px;height:1.00px;background:#0c0c18"></div>
<div style="left:520.20px;top:124.90px;width:67.45px;height:1.10px;background:linear-gradient(90deg,#707080,#f4f4f4 50%,#707080)"></div>
<div style="left:521.00px;top:107.00px;font-family:'Liberation Mono',monospace;font-weight:bold;font-size:10.0px;line-height:11.328px;color:#fff;white-space:pre;letter-spacing:0px;transform:scaleX(1.175);transform-origin:0 0;text-shadow:0.9px 0.9px 0 #101820;">7</div>
<div style="left:589.10px;top:105.60px;width:1.40px;height:38.60px;background:#1a2a3c"></div>
<div style="left:590.50px;top:105.60px;width:66.30px;height:37.60px;background:linear-gradient(#1c1a30,#24223f 45%,#302d5e)"></div>
<div style="left:590.50px;top:143.20px;width:66.30px;height:1.00px;background:#221e48"></div>
<div style="left:590.50px;top:125.90px;width:66.30px;height:1.00px;background:#0c0c18"></div>
<div style="left:590.50px;top:124.90px;width:66.30px;height:1.10px;background:linear-gradient(90deg,#707080,#f4f4f4 50%,#707080)"></div>
<div style="left:591.30px;top:107.00px;font-family:'Liberation Mono',monospace;font-weight:bold;font-size:10.0px;line-height:11.328px;color:#fff;white-space:pre;letter-spacing:0px;transform:scaleX(1.175);transform-origin:0 0;text-shadow:0.9px 0.9px 0 #101820;">8</div>
<div style="left:94.80px;top:145.60px;width:563.20px;height:277.40px;background:#000"></div>
<div style="left:95.00px;top:146.00px;width:8.20px;height:277.00px;background:#1c2b3b;box-shadow:inset 0.9px 0 0 #34506c,inset -0.7px 0 0 #24384c"></div>
<div style="left:649.80px;top:146.00px;width:8.20px;height:277.00px;background:#1c2b3b;box-shadow:inset 0.9px 0 0 #34506c,inset -0.7px 0 0 #24384c"></div>
<div style="left:103.20px;top:146.00px;width:546.60px;height:8.30px;background:#1c2b3b;box-shadow:inset 0 0.9px 0 #34506c"></div>
<div style="left:103.20px;top:414.00px;width:546.60px;height:9.00px;background:#1c2b3b;box-shadow:inset 0 0.9px 0 #34506c"></div>
<div style="left:95.00px;top:146.00px;width:8.20px;height:8.30px;background:linear-gradient(90deg,#fafafa,#e4e4e4 50%,#b0b0b0);box-shadow:inset -0.7px -0.7px 0 #404040"><svg viewBox="0 0 10 10" preserveAspectRatio="none" width="100%" height="100%" style="position:absolute;left:0;top:0"><path d="M1.0 7.4 L5.0 3.3 L9.0 7.4Z" fill="#000"/></svg></div>
<div style="left:103.20px;top:146.00px;width:9.80px;height:8.30px;background:linear-gradient(90deg,#fafafa,#e4e4e4 50%,#b0b0b0);box-shadow:inset -0.7px -0.7px 0 #404040"><svg viewBox="0 0 10 10" preserveAspectRatio="none" width="100%" height="100%" style="position:absolute;left:0;top:0"><path d="M7.4 1.2 L2.6 5.2 L7.4 9.1Z" fill="#000"/></svg></div>
<div style="left:113.00px;top:146.00px;width:454.60px;height:8.30px;background:linear-gradient(#fcfcfc,#e6e6e6 35%,#c0c0c0 75%,#8e8e8e 90%,#303030)"></div>
<div style="left:641.00px;top:146.00px;width:8.80px;height:8.30px;background:linear-gradient(90deg,#fafafa,#e4e4e4 50%,#b0b0b0);box-shadow:inset -0.7px -0.7px 0 #404040"><svg viewBox="0 0 10 10" preserveAspectRatio="none" width="100%" height="100%" style="position:absolute;left:0;top:0"><path d="M2.6 1.2 L7.4 5.2 L2.6 9.1Z" fill="#000"/></svg></div>
<div style="left:649.80px;top:146.00px;width:8.20px;height:8.30px;background:linear-gradient(90deg,#fafafa,#e4e4e4 50%,#b0b0b0);box-shadow:inset -0.7px -0.7px 0 #404040"><svg viewBox="0 0 10 10" preserveAspectRatio="none" width="100%" height="100%" style="position:absolute;left:0;top:0"><path d="M1.0 7.4 L5.0 3.3 L9.0 7.4Z" fill="#000"/></svg></div>
<div style="left:95.00px;top:154.40px;width:8.20px;height:7.10px;background:linear-gradient(90deg,#f4f4f4,#d4d4d4 50%,#8e8e8e)"></div>
<div style="left:649.80px;top:154.40px;width:8.20px;height:7.60px;background:linear-gradient(90deg,#f4f4f4,#d4d4d4 50%,#8e8e8e)"></div>
<div style="left:95.00px;top:414.00px;width:8.20px;height:9.00px;background:linear-gradient(90deg,#fafafa,#e4e4e4 50%,#b0b0b0);box-shadow:inset -0.7px -0.7px 0 #404040"><svg viewBox="0 0 10 10" preserveAspectRatio="none" width="100%" height="100%" style="position:absolute;left:0;top:0"><path d="M1.3 3.2 L5.1 7.0 L8.9 3.2Z" fill="#000"/></svg></div>
<div style="left:103.20px;top:414.00px;width:9.80px;height:9.00px;background:linear-gradient(90deg,#fafafa,#e4e4e4 50%,#b0b0b0);box-shadow:inset -0.7px -0.7px 0 #404040"><svg viewBox="0 0 10 10" preserveAspectRatio="none" width="100%" height="100%" style="position:absolute;left:0;top:0"><path d="M7.4 1.2 L2.6 5.2 L7.4 9.1Z" fill="#000"/></svg></div>
<div style="left:113.00px;top:414.00px;width:454.60px;height:9.00px;background:linear-gradient(#fcfcfc,#e6e6e6 35%,#c0c0c0 75%,#8e8e8e 90%,#303030)"></div>
<div style="left:641.00px;top:414.00px;width:8.80px;height:9.00px;background:linear-gradient(90deg,#fafafa,#e4e4e4 50%,#b0b0b0);box-shadow:inset -0.7px -0.7px 0 #404040"><svg viewBox="0 0 10 10" preserveAspectRatio="none" width="100%" height="100%" style="position:absolute;left:0;top:0"><path d="M2.6 1.2 L7.4 5.2 L2.6 9.1Z" fill="#000"/></svg></div>
<div style="left:649.80px;top:414.00px;width:8.20px;height:9.00px;background:linear-gradient(90deg,#fafafa,#e4e4e4 50%,#b0b0b0);box-shadow:inset -0.7px -0.7px 0 #404040"><svg viewBox="0 0 10 10" preserveAspectRatio="none" width="100%" height="100%" style="position:absolute;left:0;top:0"><path d="M1.3 3.2 L5.1 7.0 L8.9 3.2Z" fill="#000"/></svg></div>
<div style="left:336.60px;top:148.20px;width:1.00px;height:4.20px;background:#404040"></div>
<div style="left:339.20px;top:148.20px;width:1.00px;height:4.20px;background:#404040"></div>
<div style="left:341.80px;top:148.20px;width:1.00px;height:4.20px;background:#404040"></div>
<div style="left:336.60px;top:416.40px;width:1.00px;height:4.20px;background:#404040"></div>
<div style="left:339.20px;top:416.40px;width:1.00px;height:4.20px;background:#404040"></div>
<div style="left:341.80px;top:416.40px;width:1.00px;height:4.20px;background:#404040"></div>
<div style="left:119.00px;top:154.30px;width:530.80px;height:8.80px;background:linear-gradient(#26374f,#182538)"></div>
<div style="left:119.00px;top:163.00px;width:530.80px;height:2.00px;background:#4a7aae"></div>
<div style="left:119.10px;top:154.30px;width:1.80px;height:259.70px;background:#4e80b6"></div>
<div style="left:155.35px;top:155.00px;font-family:'Liberation Mono',monospace;font-weight:bold;font-size:9.4px;line-height:10.64832px;color:#ffff20;white-space:pre;letter-spacing:0px;transform:scaleX(1.1);transform-origin:0 0;">1</div>
<div style="left:195.50px;top:154.30px;width:1.80px;height:259.70px;background:#4e80b6"></div>
<div style="left:231.75px;top:155.00px;font-family:'Liberation Mono',monospace;font-weight:bold;font-size:9.4px;line-height:10.64832px;color:#ffffff;white-space:pre;letter-spacing:0px;transform:scaleX(1.1);transform-origin:0 0;">2</div>
<div style="left:272.10px;top:154.30px;width:1.80px;height:259.70px;background:#4e80b6"></div>
<div style="left:308.35px;top:155.00px;font-family:'Liberation Mono',monospace;font-weight:bold;font-size:9.4px;line-height:10.64832px;color:#ffff20;white-space:pre;letter-spacing:0px;transform:scaleX(1.1);transform-origin:0 0;">3</div>
<div style="left:348.80px;top:154.30px;width:1.80px;height:259.70px;background:#4e80b6"></div>
<div style="left:385.05px;top:155.00px;font-family:'Liberation Mono',monospace;font-weight:bold;font-size:9.4px;line-height:10.64832px;color:#ffffff;white-space:pre;letter-spacing:0px;transform:scaleX(1.1);transform-origin:0 0;">4</div>
<div style="left:425.50px;top:154.30px;width:1.80px;height:259.70px;background:#4e80b6"></div>
<div style="left:461.75px;top:155.00px;font-family:'Liberation Mono',monospace;font-weight:bold;font-size:9.4px;line-height:10.64832px;color:#ffff20;white-space:pre;letter-spacing:0px;transform:scaleX(1.1);transform-origin:0 0;">5</div>
<div style="left:502.20px;top:154.30px;width:1.80px;height:259.70px;background:#4e80b6"></div>
<div style="left:538.45px;top:155.00px;font-family:'Liberation Mono',monospace;font-weight:bold;font-size:9.4px;line-height:10.64832px;color:#ffffff;white-space:pre;letter-spacing:0px;transform:scaleX(1.1);transform-origin:0 0;">6</div>
<div style="left:578.90px;top:154.30px;width:1.80px;height:259.70px;background:#4e80b6"></div>
<div style="left:615.15px;top:155.00px;font-family:'Liberation Mono',monospace;font-weight:bold;font-size:9.4px;line-height:10.64832px;color:#ffff20;white-space:pre;letter-spacing:0px;transform:scaleX(1.1);transform-origin:0 0;">7</div>
<div style="left:103.40px;top:284.80px;width:15.60px;height:7.60px;background:#72245a"></div>
<div style="left:119.00px;top:284.80px;width:530.80px;height:8.00px;background:#72245a;box-shadow:inset 0 0.8px 0 #8a3470,inset 0 -0.8px 0 #5a1a44"></div>
<div style="left:121.05px;top:284.80px;width:21.70px;height:8.00px;background:#8282f8;box-shadow:inset 0 0.8px 0 #a0a0ff"></div>
<div style="left:119.10px;top:284.80px;width:1.80px;height:8.00px;background:#4e80b6"></div>
<div style="left:195.50px;top:284.80px;width:1.80px;height:8.00px;background:#4e80b6"></div>
<div style="left:272.10px;top:284.80px;width:1.80px;height:8.00px;background:#4e80b6"></div>
<div style="left:348.80px;top:284.80px;width:1.80px;height:8.00px;background:#4e80b6"></div>
<div style="left:425.50px;top:284.80px;width:1.80px;height:8.00px;background:#4e80b6"></div>
<div style="left:502.20px;top:284.80px;width:1.80px;height:8.00px;background:#4e80b6"></div>
<div style="left:578.90px;top:284.80px;width:1.80px;height:8.00px;background:#4e80b6"></div>
<div style="left:102.80px;top:285.69px;font-family:'Liberation Mono',monospace;font-weight:bold;font-size:9.2px;line-height:7.05px;color:#fff;white-space:pre;letter-spacing:0px;transform:scaleX(1.3);transform-origin:0 0;-webkit-text-stroke:0.2px #fff;"><span style="color:#ffff20">00</span>
<span style="color:#ffffff">01</span>
<span style="color:#ffffff">02</span>
<span style="color:#ffffff">03</span>
<span style="color:#ffff20">04</span>
<span style="color:#ffffff">05</span>
<span style="color:#ffffff">06</span>
<span style="color:#ffffff">07</span>
<span style="color:#ffff20">08</span>
<span style="color:#ffffff">09</span>
<span style="color:#ffffff">0A</span>
<span style="color:#ffffff">0B</span>
<span style="color:#ffff20">0C</span>
<span style="color:#ffffff">0D</span>
<span style="color:#ffffff">0E</span>
<span style="color:#ffffff">0F</span>
<span style="color:#ffff20">10</span>
<span style="color:#ffffff">11</span></div>
<svg width="752" height="423" style="position:absolute;left:0;top:0"><defs><pattern id="dp" patternUnits="userSpaceOnUse" x="120.0" y="284.8" width="76.7" height="7.05"><rect x="4.65" y="4.45" width="1.7" height="1.1" fill="#dcdcdc"/><rect x="11.65" y="4.45" width="1.7" height="1.1" fill="#dcdcdc"/><rect x="18.65" y="4.45" width="1.7" height="1.1" fill="#dcdcdc"/><rect x="26.45" y="4.45" width="1.7" height="1.1" fill="#68b0e0"/><rect x="33.65" y="4.45" width="1.7" height="1.1" fill="#68b0e0"/><rect x="41.65" y="4.45" width="1.7" height="1.1" fill="#58d058"/><rect x="48.75" y="4.45" width="1.7" height="1.1" fill="#58d058"/><rect x="56.35" y="4.45" width="1.7" height="1.1" fill="#e868d8"/><rect x="64.35" y="4.45" width="1.7" height="1.1" fill="#f0c060"/><rect x="71.45" y="4.45" width="1.7" height="1.1" fill="#f0c060"/></pattern></defs><rect x="120.0" y="284.8" width="529.80" height="129.00" fill="url(#dp)"/></svg>
</div></body></html>
